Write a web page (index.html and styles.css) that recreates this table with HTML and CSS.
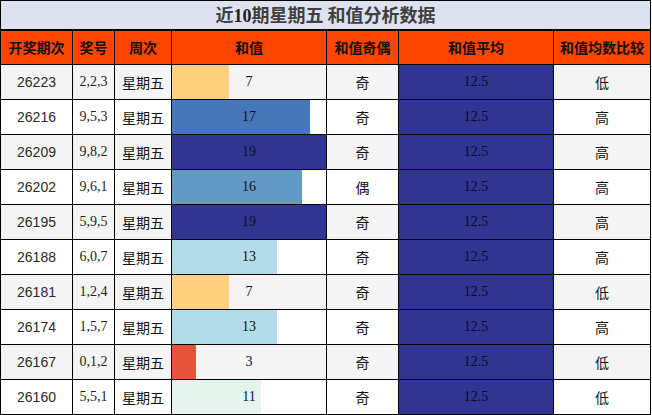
FILE: index.html
```html
<!DOCTYPE html>
<html lang="zh">
<head>
<meta charset="utf-8">
<link rel="stylesheet" href="styles.css">
</head>
<body>
<table class="sheet">
  <colgroup>
    <col class="c1"><col class="c2"><col class="c3"><col class="c4"><col class="c5"><col class="c6"><col class="c7">
  </colgroup>
  <thead>
    <tr class="title-row"><th colspan="7" class="title">近<span class="num">10</span>期星期五 和值分析数据</th></tr>
    <tr class="head-row">
      <th>开奖期次</th><th>奖号</th><th>周次</th><th>和值</th><th>和值奇偶</th><th>和值平均</th><th>和值均数比较</th>
    </tr>
  </thead>
  <tbody>
    <tr class="odd"><td class="period">26223</td><td class="num">2,2,3</td><td class="cjk">星期五</td><td class="bar num" style="--w:36.8%;--c:#ffd080">7</td><td class="cjk">奇</td><td class="avg num">12.5</td><td class="cjk">低</td></tr>
    <tr><td class="period">26216</td><td class="num">9,5,3</td><td class="cjk">星期五</td><td class="bar num" style="--w:89.5%;--c:#4677ba">17</td><td class="cjk">奇</td><td class="avg num">12.5</td><td class="cjk">高</td></tr>
    <tr class="odd"><td class="period">26209</td><td class="num">9,8,2</td><td class="cjk">星期五</td><td class="bar num" style="--w:100%;--c:#303592">19</td><td class="cjk">奇</td><td class="avg num">12.5</td><td class="cjk">高</td></tr>
    <tr><td class="period">26202</td><td class="num">9,6,1</td><td class="cjk">星期五</td><td class="bar num" style="--w:84.2%;--c:#6399c6">16</td><td class="cjk">偶</td><td class="avg num">12.5</td><td class="cjk">高</td></tr>
    <tr class="odd"><td class="period">26195</td><td class="num">5,9,5</td><td class="cjk">星期五</td><td class="bar num" style="--w:100%;--c:#303592">19</td><td class="cjk">奇</td><td class="avg num">12.5</td><td class="cjk">高</td></tr>
    <tr><td class="period">26188</td><td class="num">6,0,7</td><td class="cjk">星期五</td><td class="bar num" style="--w:68.4%;--c:#b2dce9">13</td><td class="cjk">奇</td><td class="avg num">12.5</td><td class="cjk">高</td></tr>
    <tr class="odd"><td class="period">26181</td><td class="num">1,2,4</td><td class="cjk">星期五</td><td class="bar num" style="--w:36.8%;--c:#ffd080">7</td><td class="cjk">奇</td><td class="avg num">12.5</td><td class="cjk">低</td></tr>
    <tr><td class="period">26174</td><td class="num">1,5,7</td><td class="cjk">星期五</td><td class="bar num" style="--w:68.4%;--c:#b2dce9">13</td><td class="cjk">奇</td><td class="avg num">12.5</td><td class="cjk">高</td></tr>
    <tr class="odd"><td class="period">26167</td><td class="num">0,1,2</td><td class="cjk">星期五</td><td class="bar num" style="--w:15.8%;--c:#e8533a">3</td><td class="cjk">奇</td><td class="avg num">12.5</td><td class="cjk">低</td></tr>
    <tr><td class="period">26160</td><td class="num">5,5,1</td><td class="cjk">星期五</td><td class="bar num" style="--w:57.9%;--c:#e5f4ec">11</td><td class="cjk">奇</td><td class="avg num">12.5</td><td class="cjk">低</td></tr>
  </tbody>
</table>
</body>
</html>
```
FILE: styles.css
```css
html, body {
  margin: 0;
  padding: 0;
  background: #ffffff;
}
.sheet {
  border-collapse: collapse;
  table-layout: fixed;
  width: 651px;
  font-family: "Noto Sans CJK SC", "Liberation Sans", sans-serif;
  color: #222;
}
.c1 { width: 72px; }
.c2 { width: 42px; }
.c3 { width: 57px; }
.c4 { width: 155px; }
.c5 { width: 72px; }
.c6 { width: 155px; }
.c7 { width: 97px; }
.sheet th, .sheet td {
  border: 1px solid #000;
  padding: 0;
  text-align: center;
  vertical-align: middle;
  overflow: hidden;
  white-space: nowrap;
  line-height: 16px;
}
.title-row {
  height: 29px;
}
.title-row th {
  border-bottom: 2px solid #000;
}
.title {
  background: #dce2f0;
  color: #404040;
  font-size: 18px;
  font-weight: bold;
}
.title .num {
  font-family: "Liberation Serif", serif;
  font-weight: bold;
}
.head-row {
  height: 35px;
}
.head-row th {
  background: #ff4500;
  color: #111;
  font-size: 14px;
  font-weight: bold;
}
.sheet tbody tr {
  height: 35px;
}
.sheet tbody td {
  font-size: 14px;
}
tbody tr.odd td {
  background: #f4f4f4;
}
.period {
  font-family: "Liberation Sans", sans-serif;
  font-size: 13px;
  color: #2a2a2a;
}
.num {
  font-family: "Liberation Serif", serif;
  color: #1e1e1e;
}
.cjk {
  font-family: "Noto Sans CJK SC", sans-serif;
  color: #111;
}
.sheet tbody td.bar {
  color: #111122;
  background-image: linear-gradient(90deg, var(--c) var(--w), transparent var(--w));
  background-repeat: no-repeat;
}
.sheet tbody td.avg {
  background: #303592;
  color: #0c0c22;
}
```
